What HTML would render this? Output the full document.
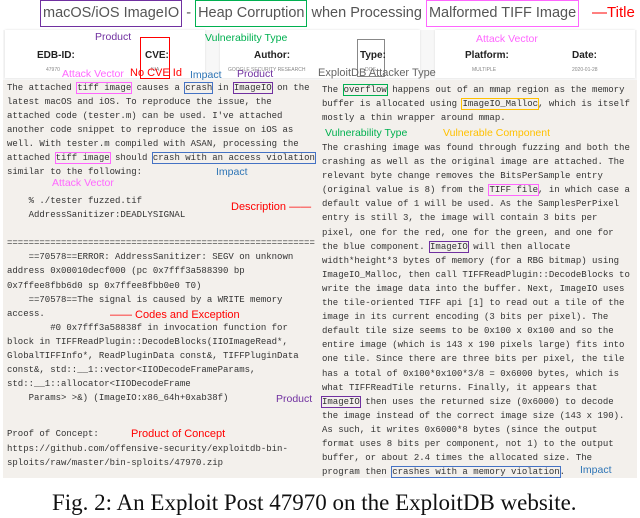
<!DOCTYPE html>
<html><head><meta charset="utf-8"><style>
*{margin:0;padding:0;box-sizing:border-box}
body{width:640px;height:511px;background:#fff;position:relative;overflow:hidden;font-family:"Liberation Sans",sans-serif}
.a{position:absolute;white-space:pre}
.m{font-family:"Liberation Mono",monospace;font-size:9px;color:#333;line-height:12px}
.r{line-height:14.1px}
.n{font-size:10.5px;line-height:12px}
.b{outline:1.3px solid;outline-offset:0.5px}
.card{position:absolute;top:30px;height:48px;background:#fff;box-shadow:0 0 2px #ddd}
.lab{font-weight:bold;font-size:10px;color:#222}
.val{font-size:5px;color:#888}
.t{display:inline-block;height:27px;border:1.5px solid;padding:0 2px}
</style></head><body>
<div class="a" style="left:3px;top:80px;width:634px;height:398px;background:#f3f0ec"></div>
<div class="a" style="left:3px;top:30px;width:634px;height:50px;background:#f7f7f7"></div>
<div class="card" style="left:5px;width:200px"></div>
<div class="card" style="left:220px;width:200px"></div>
<div class="card" style="left:435px;width:200px"></div>

<div class="a" style="left:40px;top:0;font-size:14.5px;line-height:24px;color:#555"><span class="t" style="border-color:#7030a0">macOS/iOS ImageIO</span> - <span class="t" style="border-color:#00b050">Heap Corruption</span> when Processing <span class="t" style="border-color:#ff66ff">Malformed TIFF Image</span></div>
<div class="a" style="left:592px;top:4px;font-size:15px;color:#f00">—Title</div>

<div class="a lab" style="left:37px;top:50px">EDB-ID:</div>
<div class="a val" style="left:46px;top:67px">47970</div>
<div class="a" style="left:140px;top:37px;width:30px;height:42px;border:1.5px solid #f00"></div>
<div class="a lab" style="left:145px;top:50px">CVE:</div>
<div class="a val" style="left:151px;top:67px">N/A</div>
<div class="a lab" style="left:254px;top:50px">Author:</div>
<div class="a val" style="left:228px;top:67px">GOOGLE SECURITY RESEARCH</div>
<div class="a" style="left:357px;top:39px;width:28px;height:38px;border:1.5px solid #888"></div>
<div class="a lab" style="left:360px;top:50px">Type:</div>
<div class="a val" style="left:365px;top:67px">DOS</div>
<div class="a lab" style="left:465px;top:50px">Platform:</div>
<div class="a val" style="left:472px;top:67px">MULTIPLE</div>
<div class="a lab" style="left:572px;top:50px">Date:</div>
<div class="a val" style="left:572px;top:67px">2020-01-28</div>

<div class="a n" style="left:95px;top:31px;color:#7030a0">Product</div>
<div class="a n" style="left:205px;top:32px;color:#00b050">Vulnerability Type</div>
<div class="a n" style="left:476px;top:33px;color:#ff66ff">Attack Vector</div>
<div class="a n" style="left:62px;top:68px;color:#ff66ff">Attack Vector</div>
<div class="a n" style="left:130px;top:67px;color:#f00;font-size:11px">No CVE Id</div>
<div class="a n" style="left:190px;top:69px;color:#2e75b6">Impact</div>
<div class="a n" style="left:237px;top:68px;color:#7030a0">Product</div>
<div class="a n" style="left:318px;top:67px;color:#666;font-size:11px">ExploitDB Attacker Type</div>

<div class="a m" style="left:7px;top:82px">The attached <span class="b" style="outline-color:#ff66ff">tiff image</span> causes a <span class="b" style="outline-color:#4472c4">crash</span> in <span class="b" style="outline-color:#7030a0">ImageIO</span> on the</div>
<div class="a m" style="left:7px;top:96px">latest macOS and iOS. To reproduce the issue, the</div>
<div class="a m" style="left:7px;top:110px">attached code (tester.m) can be used. I've attached</div>
<div class="a m" style="left:7px;top:124px">another code snippet to reproduce the issue on iOS as</div>
<div class="a m" style="left:7px;top:138px">well. With tester.m compiled with ASAN, processing the</div>
<div class="a m" style="left:7px;top:152px">attached <span class="b" style="outline-color:#ff66ff">tiff image</span> should <span class="b" style="outline-color:#4472c4">crash with an access violation</span></div>
<div class="a m" style="left:7px;top:166px">similar to the following:</div>
<div class="a n" style="left:216px;top:166px;color:#2e75b6">Impact</div>
<div class="a n" style="left:52px;top:177px;color:#ff66ff">Attack Vector</div>
<div class="a m" style="left:7px;top:195px">    % ./tester fuzzed.tif</div>
<div class="a m" style="left:7px;top:209px">    AddressSanitizer:DEADLYSIGNAL</div>
<div class="a n" style="left:231px;top:201px;color:#f00;font-size:11px">Description ——</div>
<div class="a m" style="left:7px;top:237px">=========================================================</div>
<div class="a m" style="left:7px;top:251px">    ==70578==ERROR: AddressSanitizer: SEGV on unknown</div>
<div class="a m" style="left:7px;top:265px">address 0x00010decf000 (pc 0x7fff3a588390 bp</div>
<div class="a m" style="left:7px;top:280px">0x7ffee8fbb6d0 sp 0x7ffee8fbb0e0 T0)</div>
<div class="a m" style="left:7px;top:294px">    ==70578==The signal is caused by a WRITE memory</div>
<div class="a m" style="left:7px;top:308px">access.</div>
<div class="a n" style="left:110px;top:309px;color:#f00;font-size:11px">—— Codes and Exception</div>
<div class="a m" style="left:7px;top:322px">        #0 0x7fff3a58838f in invocation function for</div>
<div class="a m" style="left:7px;top:336px">block in TIFFReadPlugin::DecodeBlocks(IIOImageRead*,</div>
<div class="a m" style="left:7px;top:350px">GlobalTIFFInfo*, ReadPluginData const&amp;, TIFFPluginData</div>
<div class="a m" style="left:7px;top:364px">const&amp;, std::__1::vector&lt;IIODecodeFrameParams,</div>
<div class="a m" style="left:7px;top:378px">std::__1::allocator&lt;IIODecodeFrame</div>
<div class="a m" style="left:7px;top:392px">    Params&gt; &gt;&amp;) (ImageIO:x86_64h+0xab38f)</div>
<div class="a n" style="left:276px;top:393px;color:#7030a0">Product</div>
<div class="a m" style="left:7px;top:428px">Proof of Concept:</div>
<div class="a n" style="left:131px;top:428px;color:#f00;font-size:11px">Product of Concept</div>
<div class="a m" style="left:7px;top:443px">https://github.com/offensive-security/exploitdb-bin-</div>
<div class="a m" style="left:7px;top:457px">sploits/raw/master/bin-sploits/47970.zip</div>

<div class="a m" style="left:322px;top:84px">The <span class="b" style="outline-color:#00b050">overflow</span> happens out of an mmap region as the memory</div>
<div class="a m" style="left:322px;top:98px">buffer is allocated using <span class="b" style="outline-color:#ffc000">ImageIO_Malloc</span>, which is itself</div>
<div class="a m" style="left:322px;top:112px">mostly a thin wrapper around mmap.</div>
<div class="a n" style="left:325px;top:127px;color:#00b050">Vulnerability Type</div>
<div class="a n" style="left:443px;top:127px;color:#ffc000">Vulnerable Component</div>
<div class="a m r" style="left:322px;top:141px">The crashing image was found through fuzzing and both the
crashing as well as the original image are attached. The
relevant byte change removes the BitsPerSample entry
(original value is 8) from the <span class="b" style="outline-color:#ff66ff">TIFF file</span>, in which case a
default value of 1 will be used. As the SamplesPerPixel
entry is still 3, the image will contain 3 bits per
pixel, one for the red, one for the green, and one for
the blue component. <span class="b" style="outline-color:#7030a0">ImageIO</span> will then allocate
width*height*3 bytes of memory (for a RBG bitmap) using
ImageIO_Malloc, then call TIFFReadPlugin::DecodeBlocks to
write the image data into the buffer. Next, ImageIO uses
the tile-oriented TIFF api [1] to read out a tile of the
image in its current encoding (3 bits per pixel). The
default tile size seems to be 0x100 x 0x100 and so the
entire image (which is 143 x 190 pixels large) fits into
one tile. Since there are three bits per pixel, the tile
has a total of 0x100*0x100*3/8 = 0x6000 bytes, which is
what TIFFReadTile returns. Finally, it appears that
<span class="b" style="outline-color:#7030a0">ImageIO</span> then uses the returned size (0x6000) to decode
the image instead of the correct image size (143 x 190).
As such, it writes 0x6000*8 bytes (since the output
format uses 8 bits per component, not 1) to the output
buffer, or about 2.4 times the allocated size. The
program then <span class="b" style="outline-color:#4472c4">crashes with a memory violation</span>.</div>
<div class="a n" style="left:580px;top:464px;color:#2e75b6">Impact</div>

<div class="a" style="left:52px;top:488px;font-family:'Liberation Serif',serif;font-size:23px;line-height:30px;color:#111">Fig. 2: An Exploit Post 47970 on the ExploitDB website.</div>
</body></html>
